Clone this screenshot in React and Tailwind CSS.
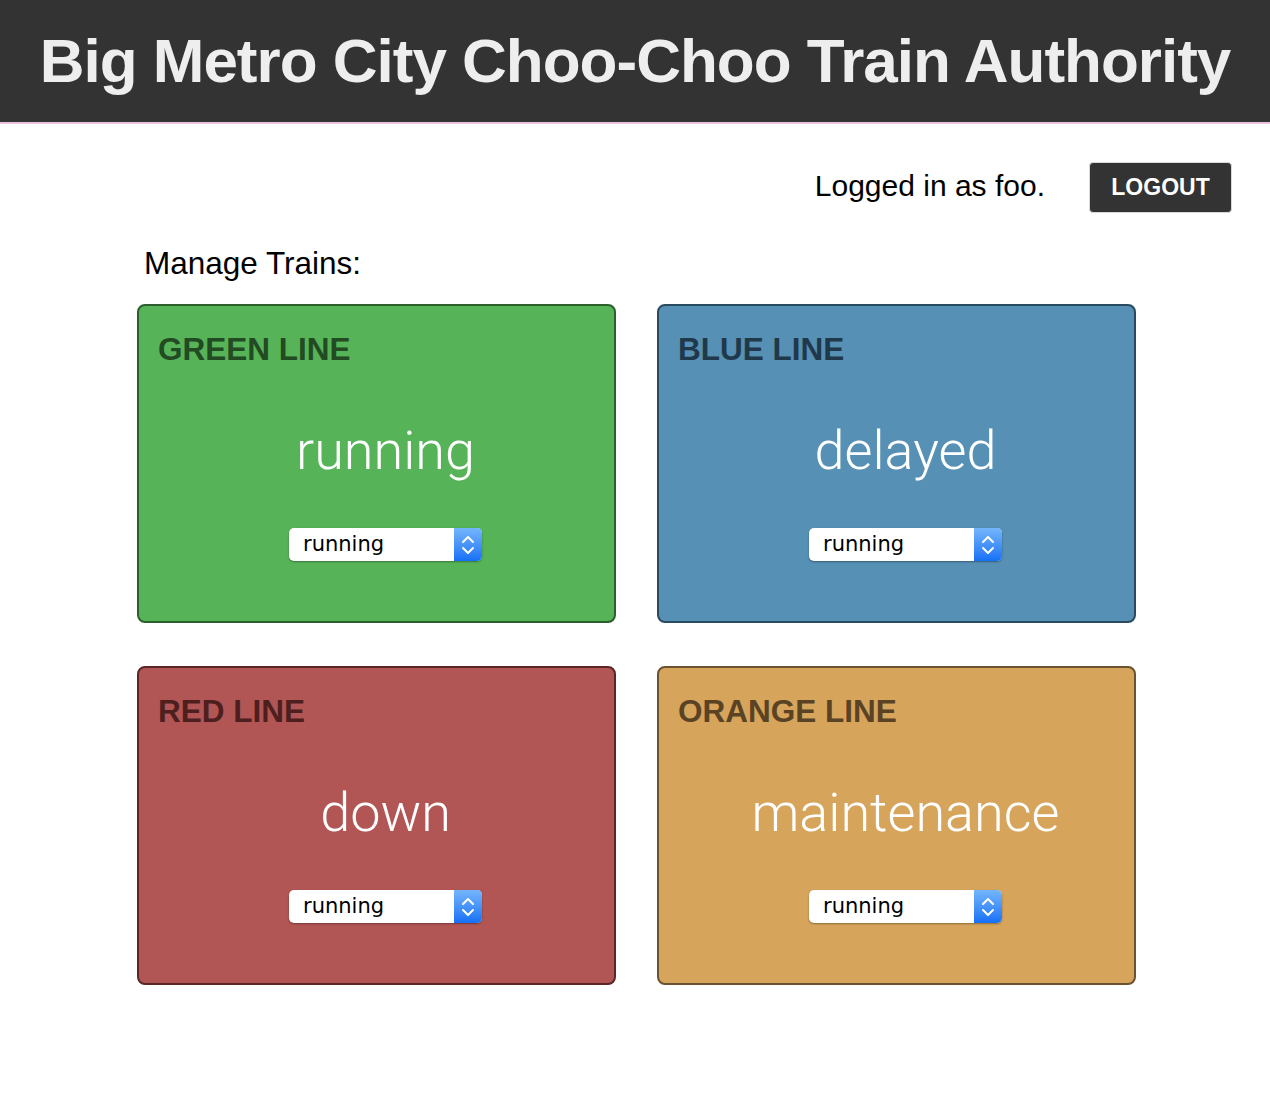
import React from "react";

const lines = [
  {
    name: "GREEN LINE",
    status: "running",
    card: "bg-[#57b357] border-[#2d5f2e]",
    title: "text-[#224a23]",
  },
  {
    name: "BLUE LINE",
    status: "delayed",
    card: "bg-[#5690b4] border-[#2a4a60]",
    title: "text-[#1f384a]",
  },
  {
    name: "RED LINE",
    status: "down",
    card: "bg-[#b15654] border-[#5a2626]",
    title: "text-[#4d1f1f]",
  },
  {
    name: "ORANGE LINE",
    status: "maintenance",
    card: "bg-[#d6a45b] border-[#6b5230]",
    title: "text-[#5a4325]",
  },
];

function FakeSelect() {
  return (
    <div className="flex h-[33px] w-[193px] overflow-hidden rounded-[5px] bg-white shadow-[0_1px_2px_rgba(0,0,0,0.35)]">
      <div className="flex flex-1 items-center pl-[14px] text-[21px] leading-none text-black [font-family:'DejaVu_Sans','Noto_Sans',sans-serif]">
        running
      </div>
      <div className="flex w-[28px] items-center justify-center bg-gradient-to-b from-[#74b5fb] to-[#1470f6]">
        <svg width="14" height="22" viewBox="0 0 14 22" fill="none">
          <path d="M2 8 L7 3 L12 8" stroke="white" strokeWidth="2" strokeLinecap="round" strokeLinejoin="round" />
          <path d="M2 14 L7 19 L12 14" stroke="white" strokeWidth="2" strokeLinecap="round" strokeLinejoin="round" />
        </svg>
      </div>
    </div>
  );
}

function Card({ line }) {
  return (
    <div className={`flex h-[319px] flex-col rounded-[8px] border-2 ${line.card}`}>
      <div
        className={`mt-[27px] px-[19px] text-[31.5px] font-bold leading-[32px] ${line.title} [font-family:'Liberation_Sans',Arial,sans-serif]`}
      >
        {line.name}
      </div>
      <div className="mt-[59px] pl-[18px] text-center text-[54px] font-light leading-[54px] text-white [font-family:Roboto,'Liberation_Sans',sans-serif]">
        {line.status}
      </div>
      <div className="mt-[50px] flex justify-center pl-[18px]">
        <FakeSelect />
      </div>
    </div>
  );
}

export default function App() {
  return (
    <div className="min-h-[1094px] bg-white [font-family:'Liberation_Sans',Arial,sans-serif]">
      <header className="flex h-[124px] items-center justify-center border-b-2 border-[#e8c4dc] bg-[#333333]">
        <h1 className="text-[62px] font-bold leading-[62px] tracking-[-1px] text-[#eeeeee]">
          Big Metro City Choo-Choo Train Authority
        </h1>
      </header>

      <div className="mt-[38px] flex items-center justify-end pr-[38px]">
        <span className="mb-[3px] text-[30px] leading-[30px] text-black">Logged in as foo.</span>
        <button className="ml-[44px] flex h-[51px] w-[143px] items-center justify-center rounded-[4px] border border-[#d8d8d8] bg-[#333333] text-[23px] font-bold text-white">
          LOGOUT
        </button>
      </div>

      <div className="mt-[35px] pl-[144px] text-[31.5px] leading-[30px] text-black">Manage Trains:</div>

      <div className="mt-[26px] grid grid-cols-[479px_479px] gap-x-[41px] gap-y-[43px] pl-[137px]">
        {lines.map((l) => (
          <Card key={l.name} line={l} />
        ))}
      </div>
    </div>
  );
}
